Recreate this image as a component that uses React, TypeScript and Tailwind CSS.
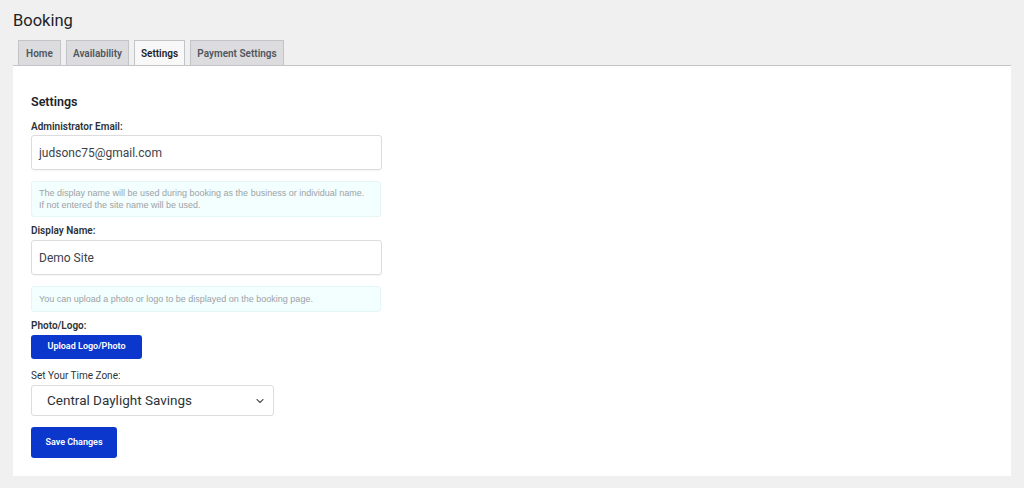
import { ChevronDown } from "lucide-react";

const ui = "font-['Segoe_UI',Roboto,sans-serif]";

const tabs = [
  { name: "Home", w: "w-[43px]" },
  { name: "Availability", w: "w-[63px]" },
  { name: "Settings", w: "w-[51px]" },
  { name: "Payment Settings", w: "w-[94px]" },
];

function Label({ children }: { children: React.ReactNode }) {
  return <div className="h-[11px] text-[10px] font-semibold leading-[11px] text-[#2c3338]">{children}</div>;
}

function Note({ h, children }: { h: string; children: React.ReactNode }) {
  return (
    <div
      className={`${h} flex w-[350px] flex-col justify-center rounded-[3px] border border-[#e4f6f6] bg-[#f3fefe] px-[7px] font-['Liberation_Sans',Arial,sans-serif] text-[9px] leading-[12.5px] text-[#9da2a6]`}
    >
      {children}
    </div>
  );
}

const field =
  "flex h-[35px] w-[351px] items-center rounded-[3px] border border-[#dcdcde] px-[7px] text-[12px] text-[#3c434a] shadow-[0_1px_1px_rgba(0,0,0,0.04)]";

export default function App() {
  return (
    <div className={`${ui} min-h-[488px] w-[1024px] bg-[#f0f0f1] px-[13px] pt-[9px] text-[#1d2327]`}>
      <h1 className="text-[16.5px] leading-6 text-[#1d2327]">Booking</h1>

      <div className="mt-[7px] flex gap-[5px] pl-[5px]">
        {tabs.map((t) => (
          <div
            key={t.name}
            className={`${t.w} flex h-[25px] items-center justify-center border border-b-0 border-[#c3c4c7] text-[10px] font-semibold ${
              t.name === "Settings" ? "bg-[#f8f8f8] text-[#1d2327]" : "bg-[#dcdcde] text-[#50575e]"
            }`}
          >
            {t.name}
          </div>
        ))}
      </div>

      <div className="h-[411px] w-[998px] border-t border-[#c3c4c7] bg-white px-[18px] pt-[28px]">
        <div className="text-[12.5px] font-semibold leading-4 text-[#1d2327]">Settings</div>

        <div className="mt-[11px] flex flex-col">
          <Label>Administrator Email:</Label>
          <div className={`mt-[3px] ${field}`}>judsonc75@gmail.com</div>

          <div className="mt-[11px]">
            <Note h="h-[36px]">
              <span>The display name will be used during booking as the business or individual name.</span>
              <span>If not entered the site name will be used.</span>
            </Note>
          </div>

          <div className="mt-[8px]">
            <Label>Display Name:</Label>
          </div>
          <div className={`mt-[4px] ${field}`}>Demo Site</div>

          <div className="mt-[11px]">
            <Note h="h-[26px]">You can upload a photo or logo to be displayed on the booking page.</Note>
          </div>

          <div className="mt-[8px]">
            <Label>Photo/Logo:</Label>
          </div>
          <button className="mt-[4px] flex h-[24px] w-[111px] items-center justify-center rounded-[3px] bg-[#0b37cc] text-[9px] font-semibold text-white">
            Upload Logo/Photo
          </button>

          <div className="mt-[11px]">
            <Label>
              <span className="font-normal">Set Your Time Zone:</span>
            </Label>
          </div>
          <div className="mt-[4px] flex h-[31px] w-[243px] items-center justify-between rounded-[3px] border border-[#dcdcde] pl-[15px] pr-[7px] text-[13.5px] text-[#2c3338]">
            <span>Central Daylight Savings</span>
            <ChevronDown size={12} strokeWidth={2.25} className="text-[#50575e]" />
          </div>

          <button className="mt-[11px] flex h-[31px] w-[86px] items-center justify-center rounded-[3px] bg-[#0b37cc] text-[9px] font-semibold text-white">
            Save Changes
          </button>
        </div>
      </div>
    </div>
  );
}
